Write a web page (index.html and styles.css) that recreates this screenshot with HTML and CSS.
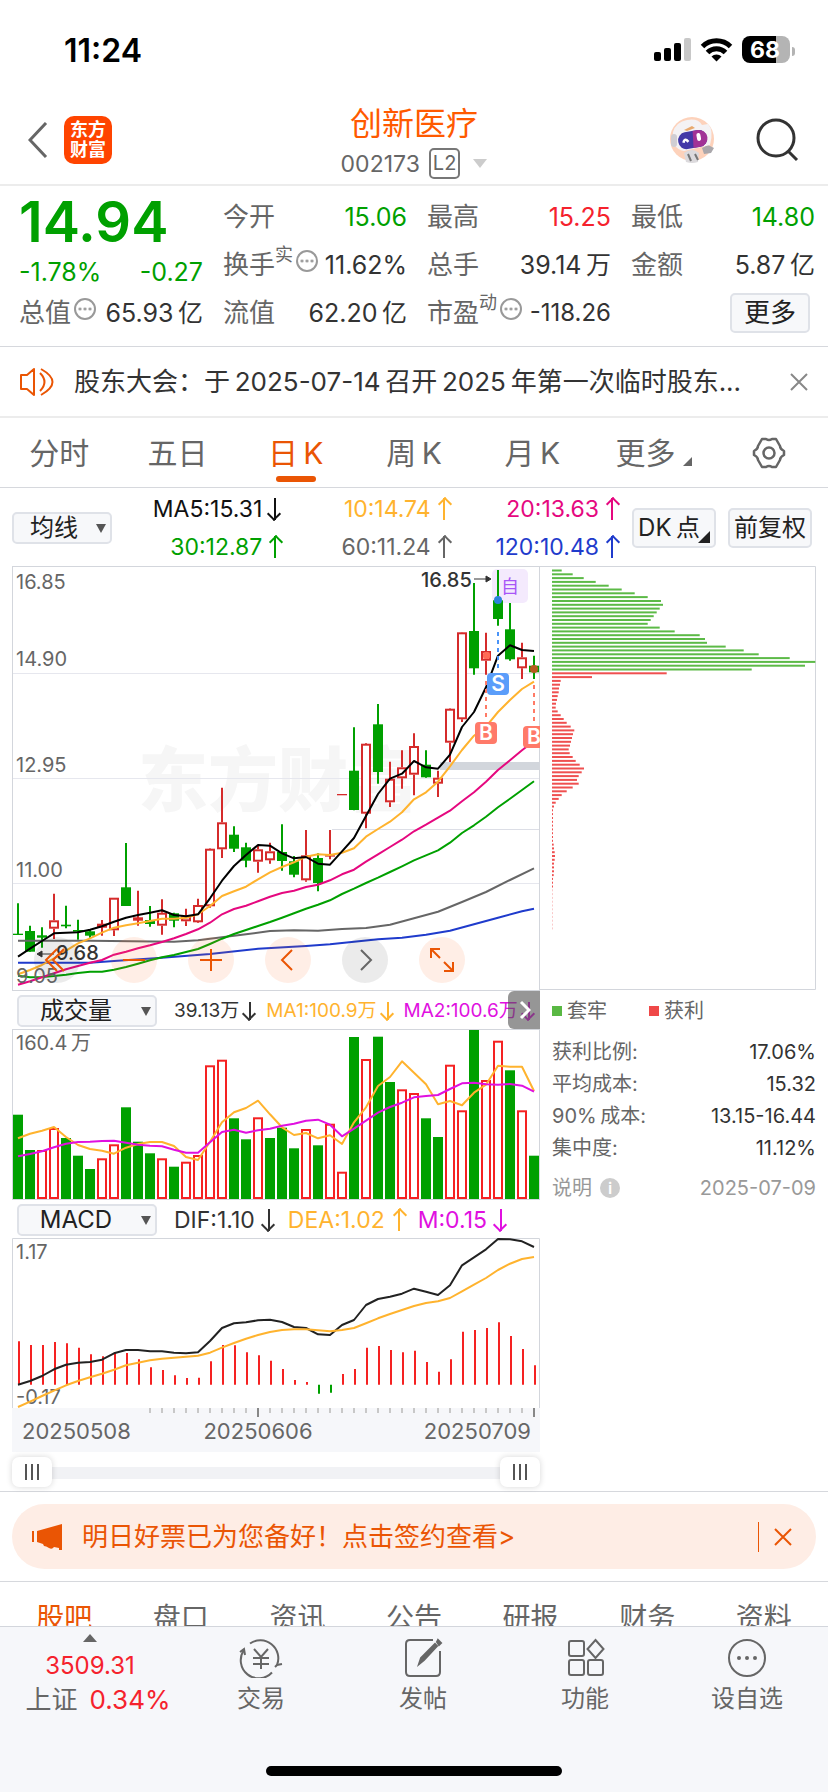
FILE: index.html
```html
<!DOCTYPE html>
<html lang="zh-CN">
<head>
<meta charset="utf-8">
<meta name="viewport" content="width=device-width">
<title>创新医疗 002173</title>
<link rel="stylesheet" href="styles.css">
</head>
<body>
<div class="statusbar">
  <span class="clock">11:24</span>
  <svg class="status-icons" viewBox="0 0 138 30" width="138" height="30" aria-hidden="true">
    <rect x="1" y="16" width="7" height="9" rx="2"/><rect x="11" y="12" width="7" height="13" rx="2"/><rect x="21" y="7" width="7" height="18" rx="2"/><rect x="31" y="2" width="7" height="23" rx="2" fill="#c8c8c8"/>
    <g fill="none" stroke="#000" stroke-width="5"><path d="M49.500 10.500a20 20 0 0 1 28 0"/><path d="M54.500 16.500a12.500 12.500 0 0 1 18 0"/></g>
    <path d="M58.500 20.500a7 7 0 0 1 10 0l-5 5z"/>
    <clipPath id="cell"><rect x="89" y="0" width="48" height="27" rx="8"/></clipPath>
    <g clip-path="url(#cell)"><rect x="89" width="34" height="27"/><rect x="123" width="14" height="27" fill="#b4b4b4"/></g>
    <text x="112" y="22" text-anchor="middle" class="charge">68</text>
  </svg>
  <i class="cell-tip"></i>
</div>

<header class="header">
  <div class="header-left">
    <button class="plain" aria-label="返回"><svg width="20" height="36" viewBox="0 0 20 36" fill="none" stroke="#666" stroke-width="3"><path d="M18 1L2 18l16 17"/></svg></button>
    <div class="logo">东方<br>财富</div>
  </div>
  <div class="header-title">
    <h1>创新医疗</h1>
    <p>002173 <span class="level">L2</span><i class="tri-down"></i></p>
  </div>
  <div class="header-right">
    <button class="plain" aria-label="助手">
      <svg width="46" height="46" viewBox="0 0 46 46"><circle cx="23" cy="22" r="22" fill="#fdd2bb"/><path d="M15 36q8-6 15 0l-1 9q-6 2-12 0z" fill="#dcdadd"/><path d="M19 37l3 7m4-7l3 6" stroke="#777" stroke-width="2"/><path d="M33 31l6-3 6 3-3 5-7 1z" fill="#aaa7ab"/><path d="M4 15Q7 5 18 3q11-2 15 5l6-1q6 6 2 21L15 34Q2 32 4 15z" fill="#f4f2f4"/><rect x="2" y="17" width="6" height="13" rx="3" fill="#d0ced3"/><path d="M15 13l8-4 3 2-8 3z" fill="#e8a96e"/><g transform="rotate(-10 24 22)"><rect x="9" y="14" width="29" height="17" rx="8" fill="#4338a7"/><path d="M25 14h5a8 8 0 0 1 0 17h-7z" fill="#a13296"/><path d="M14 24q2-5 5 0" fill="none" stroke="#fff" stroke-width="2.500"/><rect x="28" y="17" width="4" height="8" rx="2" fill="#fff"/></g></svg>
    </button>
    <button class="plain" aria-label="搜索"><svg width="44" height="44" viewBox="0 0 44 44" fill="none" stroke="#333" stroke-width="3"><circle cx="20" cy="20" r="18"/><path d="M32 33l9 9"/></svg></button>
  </div>
</header>

<main class="content">
<section class="quote">
  <div class="quote-col">
    <strong class="price">14.94</strong>
    <div class="cell change"><span>-1.78%</span><span>-0.27</span></div>
    <div class="cell"><span class="name">总值<i class="dots"></i></span><b>65.93&thinsp;亿</b></div>
  </div>
  <div class="quote-col">
    <div class="cell"><span class="name">今开</span><b class="down">15.06</b></div>
    <div class="cell"><span class="name">换手<sup>实</sup><i class="dots"></i></span><b>11.62%</b></div>
    <div class="cell"><span class="name">流值</span><b>62.20&thinsp;亿</b></div>
  </div>
  <div class="quote-col">
    <div class="cell"><span class="name">最高</span><b class="up">15.25</b></div>
    <div class="cell"><span class="name">总手</span><b>39.14&thinsp;万</b></div>
    <div class="cell"><span class="name">市盈<sup>动</sup><i class="dots"></i></span><b class="long">-118.26</b></div>
  </div>
  <div class="quote-col">
    <div class="cell"><span class="name">最低</span><b class="down">14.80</b></div>
    <div class="cell"><span class="name">金额</span><b>5.87&thinsp;亿</b></div>
    <div class="cell end"><button class="box more">更多</button></div>
  </div>
</section>

<section class="notice">
  <svg width="34" height="30" viewBox="0 0 34 30" fill="none" stroke="#ea5504" stroke-width="2" stroke-linejoin="round"><path d="M14 2v26l-7-6H1V8h6zM20 6q9 9 0 18M21 2q23 13 0 26"/></svg>
  <p>股东大会：于&thinsp;2025-07-14&thinsp;召开&thinsp;2025&thinsp;年第一次临时股东...</p>
  <button class="plain" aria-label="关闭"><svg width="18" height="18" viewBox="0 0 18 18" stroke="#888" stroke-width="2"><path d="M1 1l16 16M17 1L1 17"/></svg></button>
</section>

<nav class="periods">
  <button>分时</button><button>五日</button><button class="active">日&thinsp;K</button><button>周&thinsp;K</button><button>月&thinsp;K</button>
  <button class="has-corner">更多<i class="corner"></i></button>
  <button aria-label="设置"><svg width="34" height="32" viewBox="0 0 34 32" fill="none" stroke="#666" stroke-width="2.500" stroke-linejoin="round"><path d="M10 2h4q3 2 6 0h4l4 7q0 3 4 5v4q-4 2-4 5l-4 7h-4q-3-2-6 0h-4l-4-7q0-3-4-5v-4q4-2 4-5z"/><circle cx="17" cy="16" r="5.500"/></svg></button>
</nav>

<section class="averages">
  <label class="pick small"><select aria-label="主图指标"><option>均线</option></select></label>
  <div class="ma-grid">
    <span class="c5">MA5:15.31<i class="arrow dn"></i></span><span class="c10">10:14.74<i class="arrow"></i></span><span class="c20">20:13.63<i class="arrow"></i></span>
    <span class="c30">30:12.87<i class="arrow"></i></span><span class="c60">60:11.24<i class="arrow"></i></span><span class="c120">120:10.48<i class="arrow"></i></span>
  </div>
  <button class="box tool dk">DK&thinsp;点<i class="corner dark"></i></button>
  <button class="box tool">前复权</button>
</section>

<section class="charts">
  <div class="chart-left">
    <div class="kline">
      <svg id="kline" viewBox="0 0 528 425" role="img" aria-label="日K线图"></svg>
      <div class="chart-buttons">
        <button class="gray" aria-label="最早"><svg viewBox="0 0 46 46"><path d="M23 12L12 23l11 11M30 12L19 23l11 11"/></svg></button>
        <button aria-label="缩小"><svg viewBox="0 0 46 46"><path d="M12 23h22"/></svg></button>
        <button aria-label="放大"><svg viewBox="0 0 46 46"><path d="M12 23h22M23 12v22"/></svg></button>
        <button aria-label="左移"><svg viewBox="0 0 46 46"><path d="M27 13L17 23l10 10"/></svg></button>
        <button class="gray next" aria-label="右移"><svg viewBox="0 0 46 46"><path d="M19 13l10 10-10 10"/></svg></button>
        <button aria-label="全屏"><svg viewBox="0 0 46 46"><path d="M12 21v-9h9M12 12l9 9M34 25v9h-9M34 34l-9-9"/></svg></button>
      </div>
    </div>
    <div class="sub-head volume-head">
      <label class="pick"><select aria-label="副图一指标"><option>成交量</option></select></label>
      <span>39.13万<i class="arrow dn"></i></span><span class="c10">MA1:100.9万<i class="arrow dn"></i></span><span class="cm">MA2:100.6万<i class="arrow dn"></i></span>
      <button class="scroll-next" aria-label="更多指标"><svg width="12" height="20" viewBox="0 0 12 20" fill="none" stroke="#fff" stroke-width="3"><path d="M2 2l8 8-8 8"/></svg></button>
    </div>
    <svg id="volume" viewBox="0 0 528 171" role="img" aria-label="成交量图"></svg>
    <div class="sub-head macd-head">
      <label class="pick"><select aria-label="副图二指标"><option>MACD</option></select></label>
      <span>DIF:1.10<i class="arrow dn"></i></span><span class="c10">DEA:1.02<i class="arrow"></i></span><span class="cm">M:0.15<i class="arrow dn"></i></span>
    </div>
    <svg id="macd" viewBox="0 0 528 170" role="img" aria-label="MACD图"></svg>
    <svg id="axis" viewBox="0 0 528 44" role="img" aria-label="日期轴"></svg>
    <div class="range"><input type="range" value="0" aria-label="开始日期"><input type="range" value="100" aria-label="结束日期"></div>
  </div>
  <aside class="chips">
    <svg id="chips" viewBox="0 0 276 424" role="img" aria-label="筹码分布"></svg>
    <div class="legend"><span><i class="key-green"></i>套牢</span><span><i class="key-red"></i>获利</span></div>
    <dl>
      <div><dt>获利比例:</dt><dd>17.06%</dd></div>
      <div><dt>平均成本:</dt><dd>15.32</dd></div>
      <div><dt>90%&thinsp;成本:</dt><dd>13.15-16.44</dd></div>
      <div><dt>集中度:</dt><dd>11.12%</dd></div>
      <div class="explain"><dt>说明<i class="info">i</i></dt><dd>2025-07-09</dd></div>
    </dl>
  </aside>
</section>

<section class="promo-wrap">
  <div class="promo">
    <svg width="30" height="28" viewBox="0 0 30 28" fill="#ea5504"><path d="M0 8h2v11H0zM5 8L30 1v26h-3v-2l-5-1q-2 3-5 1t-5-2l-1-2-6-2z"/></svg>
    <a href="#sign">明日好票已为您备好！点击签约查看&gt;</a>
    <button class="plain" aria-label="关闭广告"><svg width="18" height="18" viewBox="0 0 18 18" stroke="#ea5504" stroke-width="2"><path d="M1 1l16 16M17 1L1 17"/></svg></button>
  </div>
</section>

<nav class="topics">
  <a class="active" href="#guba">股吧</a><a href="#pankou">盘口</a><a href="#news">资讯</a><a href="#notice">公告</a><a href="#report">研报</a><a href="#finance">财务</a><a href="#profile">资料</a>
</nav>
</main>

<footer class="tabbar">
  <a class="index" href="#index"><i class="tri-up"></i><span class="up">3509.31</span><span class="rate">上证<b class="up">0.34%</b></span></a>
  <a href="#trade"><svg viewBox="0 0 44 40"><path d="M11 5.500A18 18 0 0 1 38 27M33 34.500A18 18 0 0 1 5 12"/><path d="M1 14l4-3 1 6M36 29l2-2 5-1M15 11l7 8 7-8M22 19v12M14 20h16M14 26h16"/></svg>交易</a>
  <a href="#post"><svg viewBox="0 0 44 40"><path d="M32 2H9q-4 0-4 4v28q0 4 4 4h26q4 0 4-4V13"/><path class="solid" d="M18 26l2-6L34 6l2 2-13 14zM36 4l1-2 3 3-2 2z"/></svg>发帖</a>
  <a href="#features"><svg viewBox="0 0 44 40"><rect x="6" y="3" width="15" height="15" rx="2"/><rect x="6" y="22" width="15" height="15" rx="2"/><rect x="25" y="22" width="15" height="15" rx="2"/><path d="M32.500 2l8 9-8 9-8-9z"/></svg>功能</a>
  <a href="#watch"><svg viewBox="0 0 44 40"><circle cx="22" cy="20" r="18"/><g class="solid"><circle cx="14" cy="20" r="1"/><circle cx="22" cy="20" r="1"/><circle cx="30" cy="20" r="1"/></g></svg>设自选</a>
  <i class="home"></i>
</footer>
<script src="charts.js"></script>
</body>
</html>
```

FILE: styles.css
```css
* { box-sizing: border-box; }
body { margin: 0; height: 100vh; display: flex; flex-direction: column; overflow: hidden; background: #fff; color: #333; font-family: Inter, "Noto Sans CJK SC", sans-serif; font-size: 24px; line-height: 32px; }
button, select { font: inherit; color: inherit; margin: 0; padding: 0; }
button { cursor: pointer; }
a { color: inherit; text-decoration: none; }
i { font-style: normal; }
b { font-weight: 400; }
h1, p, dl, dd { margin: 0; }
svg { display: block; flex: none; }
.plain { border: 0; background: none; }
.up { color: #f5222d; }
.down { color: #00a000; }
.box { border: 2px solid #dfe2e8; border-radius: 5px; background: #f7f8fa; color: #222; }

.statusbar { flex: none; height: 96px; padding: 6px 33px 0 64px; display: flex; align-items: center; }
.clock { color: #000; font-size: 32px; font-weight: 600; }
.status-icons { margin-left: auto; }
.charge { fill: #fff; font-size: 23px; font-weight: 700; }
.cell-tip { width: 3px; height: 9px; margin-left: 1px; background: #b4b4b4; border-radius: 0 3px 3px 0; }

.header { flex: none; height: 90px; padding: 0 28px; display: grid; grid-template-columns: 1fr auto 1fr; align-items: center; border-bottom: 2px solid #ececec; }
.header-left { display: flex; align-items: center; gap: 16px; }
.logo { width: 48px; height: 48px; padding-top: 4px; border-radius: 10px; background: #ff4400; color: #fff; font-size: 18px; line-height: 20px; font-weight: 700; text-align: center; }
.header-title { padding-top: 3px; text-align: center; }
.header-title h1 { color: #ff5a00; font-size: 32px; font-weight: 400; line-height: 44px; }
.header-title p { display: flex; align-items: center; color: #666; font-size: 23px; line-height: 36px; }
.level { margin: 0 13px 0 9px; padding: 0 2px; border: 2px solid #777; border-radius: 5px; font-size: 20px; line-height: 27px; }
.tri-down { border: 7px solid transparent; border-top: 9px solid #ccc; border-bottom: 0; }
.header-right { display: flex; justify-content: flex-end; align-items: center; gap: 41px; }

.content { flex: 1; min-height: 0; overflow: hidden; }
.quote { display: grid; grid-template-columns: repeat(4, 1fr); gap: 20px; padding: 7px 13px 9px 19px; border-bottom: 1px solid #d6d8dd; white-space: nowrap; font-size: 25px; }
.cell { height: 48px; display: flex; justify-content: space-between; align-items: center; }
.cell.end { justify-content: flex-end; }
.long { font-size: 24px; }
.price { display: block; height: 62px; color: #00a000; font-size: 56px; font-weight: 600; line-height: 58px; }
.cell.change { height: 34px; color: #00a000; }
.name { display: flex; align-items: center; color: #666; font-size: 26px; }
.name sup { align-self: flex-start; margin-top: -6px; font-size: 18px; line-height: 24px; }
.dots { width: 22px; height: 22px; margin: -8px 0 0 3px; border: 2px solid #999; border-radius: 50%; background: radial-gradient(circle, #999 1px, transparent 2px) center / 5px 18px repeat-x content-box; padding: 0 1px; }
.more { width: 80px; height: 40px; margin-right: 5px; font-size: 26px; line-height: 32px; }

.notice { display: flex; align-items: center; height: 71px; padding: 0 20px; border-bottom: 2px solid #ececec; }
.notice p { flex: 1; min-width: 0; margin: 0 20px; overflow: hidden; white-space: nowrap; text-overflow: ellipsis; font-size: 26px; line-height: 36px; }

.periods { height: 70px; display: grid; grid-template-columns: repeat(7, 1fr); border-bottom: 1px solid #d6d8dd; }
.periods button { position: relative; display: flex; justify-content: center; align-items: center; border: 0; background: none; color: #666; font-size: 30px; }
.periods .active { color: #ea5504; }
.periods .active::after { content: ""; position: absolute; bottom: 5px; width: 40px; height: 6px; border-radius: 3px; background: #ea5504; }
.corner { position: absolute; right: 18px; bottom: 21px; border-left: 9px solid transparent; border-bottom: 9px solid #666; }
.corner.dark { right: 4px; bottom: 3px; border-left-width: 12px; border-bottom: 12px solid #222; }
.periods .has-corner { padding-right: 10px; }

.averages { height: 78px; padding: 1px 16px 0 12px; display: flex; align-items: center; }
.pick { position: relative; width: 140px; height: 32px; }
.pick::after { content: ""; position: absolute; right: 6px; top: 12px; border: 5px solid transparent; border-top: 9px solid #555; border-bottom: 0; pointer-events: none; }
.pick select { width: 100%; height: 100%; appearance: none; padding-right: 22px; border: 2px solid #dfe2e8; border-radius: 5px; background: #f7f8fa; color: #222; line-height: 28px; text-align: center; text-align-last: center; }
.pick.small { width: 100px; }
.pick.small select { padding-right: 16px; }
.ma-grid { flex: 1; display: grid; grid-template-columns: repeat(3, 1fr); grid-auto-rows: 38px; margin-right: 15px; font-size: 23px; white-space: nowrap; }
.ma-grid span { display: flex; justify-content: flex-end; align-items: center; }
.arrow { display: inline-block; position: relative; width: 10px; height: 22px; margin-left: 8px; background: linear-gradient(currentColor, currentColor) center / 2px 100% no-repeat; }
.arrow::after { content: ""; position: absolute; left: 1px; top: 1px; width: 8px; height: 8px; border: solid currentColor; border-width: 2px 0 0 2px; transform: rotate(45deg); }
.arrow.dn { transform: rotate(180deg); }
.c5 { color: #111; } .c10 { color: #ffb32e; } .c20 { color: #e5087f; } .c30 { color: #00a000; } .c60 { color: #666; } .c120 { color: #1f3bcc; } .cm { color: #e010e0; }
.tool { position: relative; width: 84px; height: 40px; white-space: nowrap; }
.tool.dk { padding-right: 10px; }
.tool + .tool { margin-left: 12px; }

.charts { display: grid; grid-template-columns: 528fr 276fr; padding: 0 12px; border-bottom: 1px solid #d6d8dd; }
.charts svg { width: 100%; }
.chart-left { min-width: 0; }
.kline { position: relative; }
.chart-buttons { position: absolute; left: 22px; bottom: 8px; display: flex; gap: 31px; }
.chart-buttons button { width: 46px; height: 46px; padding: 0; border: 0; border-radius: 50%; background: rgba(255, 115, 50, .12); }
.chart-buttons .gray { background: rgba(60, 60, 60, .1); }
.chart-buttons svg { fill: none; stroke: #ea5504; stroke-width: 2; }
.chart-buttons .next svg { stroke: #666; }
.sub-head { position: relative; height: 38px; padding: 1px 0 0 5px; display: flex; align-items: center; white-space: nowrap; overflow: hidden; }
.sub-head span { display: flex; align-items: center; }
.sub-head .pick { flex: none; }
.sub-head .pick + span { margin-left: 17px; }
.volume-head span { margin-right: 11px; font-size: 19px; }
.volume-head .arrow { height: 18px; margin-left: 6px; }
.macd-head span { margin-right: 14px; font-size: 23px; }
.macd-head .arrow { margin-left: 9px; }
.scroll-next { position: absolute; right: 0; top: 0; width: 32px; height: 38px; padding-left: 11px; border: 0; border-radius: 6px 0 0 6px; background: rgba(80, 80, 80, .6); }
.charts .scroll-next svg { width: 12px; }
.range { position: relative; height: 39px; background: linear-gradient(#f1f2f5, #f1f2f5) center 15px / 100% 12px no-repeat; }
.range input { appearance: none; position: absolute; left: 0; top: 5px; width: 100%; height: 30px; margin: 0; background: none; pointer-events: none; }
.range input::-webkit-slider-thumb { appearance: none; width: 40px; height: 30px; border-radius: 7px; box-shadow: 0 0 6px rgba(0, 0, 0, .16); pointer-events: auto; background: linear-gradient(#555, #555) 13px 7px / 2px 16px no-repeat, linear-gradient(#555, #555) 19px 7px / 2px 16px no-repeat, linear-gradient(#555, #555) 25px 7px / 2px 16px no-repeat, #fff; }

.frame { fill: none; stroke: #d3d6dc; }
.grid-line { stroke: #e6e7ee; stroke-width: 1; }
.scale { fill: #666; font-size: 20px; }
.peak { fill: #333; font-size: 20px; font-weight: 500; }
.date { fill: #666; font-size: 22px; }
.watermark { fill: #f6f6f6; font-size: 70px; font-weight: 900; }
.badge { fill: #fff; font-size: 21px; font-weight: 600; text-anchor: middle; }
.self { fill: #a855f7; font-size: 18px; text-anchor: middle; }

.legend { display: flex; gap: 42px; padding: 5px 0 4px 12px; color: #666; font-size: 20px; }
.legend span { display: flex; align-items: center; gap: 5px; }
.legend i { width: 10px; height: 10px; }
.key-green { background: #59b843; }
.key-red { background: #ef4848; }
.chips dl { padding: 5px 0 0 12px; font-size: 20px; }
.chips dl div { display: flex; justify-content: space-between; white-space: nowrap; }
.chips dt { display: flex; align-items: center; color: #666; }
.chips dl .explain { margin-top: 8px; }
.explain, .chips .explain dt { color: #999; }
.info { width: 20px; height: 20px; margin-left: 8px; border-radius: 50%; background: #ccc; color: #fff; font-size: 16px; line-height: 20px; font-weight: 600; text-align: center; }

.promo-wrap { padding: 12px; border-bottom: 1px solid #d6d8dd; }
.promo { display: flex; align-items: center; height: 65px; padding: 0 24px 0 20px; border-radius: 33px; background: #feede5; color: #ea5504; font-size: 26px; }
.promo a { flex: 1; margin-left: 20px; }
.promo .plain { height: 30px; padding-left: 15px; border-left: 1px solid #ea5504; }

.topics { display: grid; grid-template-columns: repeat(7, 1fr); padding: 16px 6px 0; color: #666; font-size: 28px; line-height: 40px; text-align: center; }
.topics .active { color: #ea5504; }

.tabbar { position: relative; flex: none; height: 166px; display: grid; grid-template-columns: 180fr 162fr 162fr 162fr 162fr; border-top: 1px solid #d3d6dc; background: #f6f7fa; color: #666; }
.tabbar a { display: flex; flex-direction: column; align-items: center; padding-top: 11px; }
.tabbar svg { width: 44px; height: 40px; margin-bottom: 5px; fill: none; stroke: #666; stroke-width: 2; }
.tabbar .solid { fill: #666; }
.tabbar .index { padding-top: 7px; }
.tri-up { margin-bottom: 8px; border: 7px solid transparent; border-top: 0; border-bottom: 8px solid #666; }
.index .rate { display: flex; gap: 12px; margin: 2px 0 0 16px; font-size: 26px; }
.home { position: absolute; bottom: 16px; left: 50%; width: 296px; height: 10px; margin-left: -148px; border-radius: 5px; background: #000; }
```

FILE: charts.js
```js
const UP = '#d52b2b', DOWN = '#00a000', YELLOW = '#ffb32e', MAGENTA = '#e5087f', PURPLE = '#e010e0';
const px = i => 6 + 12 * i;
const num = v => Math.round(v * 10) / 10;
const line = (pts, color, y, w = 2) =>
  `<polyline fill="none" stroke="${color}" stroke-width="${w}" stroke-linejoin="round" points="${pts.map((p, i) => Array.isArray(p) ? px(p[0]) + ',' + num(y(p[1])) : px(i) + ',' + num(y(p))).join(' ')}"/>`;
const put = (id, parts) => { document.getElementById(id).innerHTML = parts.join(''); };

// Each candle: direction, high, body top, body bottom, low (thirds of a pixel).
const candles = `g 1030 1121 1125 1125|g 1097 1113 1175 1175|g 1102 1126 1133 1163|r 1001 1081 1106 1137|g 1037 1094 1099 1105|g 1079 1110 1115 1139|g 1108 1114 1127 1133|r 1080 1091 1103 1127|r 1013 1013 1111 1128|g 849 982 1038 1038|r 992 1072 1082 1097|g 1038 1080 1092 1100|r 1018 1058 1097 1124|g 1058 1060 1082 1102|r 1046 1069 1084 1098|r 1016 1035 1087 1089|r 865 866 1039 1043|r 683 787 868 894|g 799 824 866 876|g 848 862 902 922|r 855 868 905 938|r 848 874 901 911|g 793 876 903 932|g 888 904 944 952|r 810 886 961 965|g 880 894 969 994|r 810 886 889 898|r 702 702 705 705|g 502 632 750 751|r 549 551 761 805|g 432 493 636 671|r 605 656 727 741|r 571 622 655 686|r 520 558 644 706|g 571 614 652 653|r 632 653 671 711|r 445 446 548 606|r 216 217 478 486|g 69 213 325 344|r 218 273 302 344|g 30 121 177 197|g 129 208 298 302|r 248 292 325 357|g 287 317 337 357`
  .split('|').map(s => s.split(' '));
const ky = v => (v - 18) / 3;
const drawCandle = ([dir, ...p], i) => {
  const [hi, top, bottom, lo] = p.map(v => num(ky(v)));
  const x = px(i), h = bottom - top;
  if (dir === 'g' || h < 5)
    return `<path stroke="${dir === 'g' ? DOWN : UP}" stroke-width="2" d="M${x} ${hi}V${lo}"/><rect x="${x - 5}" y="${top}" width="10" height="${num(Math.max(h, 1.3))}" fill="${dir === 'g' ? DOWN : UP}"/>`;
  return `<path stroke="${UP}" stroke-width="2" d="M${x} ${hi}V${top}M${x} ${bottom}V${lo}"/><rect x="${x - 4}" y="${num(top + 1)}" width="8" height="${num(h - 2)}" fill="#fff" stroke="${UP}" stroke-width="2"/>`;
};
const ma5 = [1190,1166,1143,1120,1118,1117,1109,1099,1085,1073,1065,1058,1051,1065,1069,1063,1015,962,918,885,855,857,880,895,891,911,914,874,834,768,702,656,641,603,622,626,584,501,456,382,287,256,270,273];
const ma10 = [1243,1230,1215,1195,1172,1150,1135,1118,1103,1096,1090,1083,1076,1076,1073,1063,1038,1008,994,980,958,937,921,907,890,883,885,878,865,830,807,785,757,718,697,665,619,570,527,500,456,420,387,365];
const ma20 = [1274,1264,1252,1240,1228,1218,1208,1200,1184,1175,1165,1156,1146,1135,1122,1108,1088,1063,1047,1037,1024,1010,999,992,981,974,961,943,929,905,883,861,839,814,794,773,752,724,697,665,630,601,571,543];
const ma30 = [1247,1252,1251,1248,1244,1239,1235,1235,1229,1221,1211,1201,1192,1185,1176,1167,1152,1136,1122,1110,1098,1086,1073,1060,1046,1034,1021,1002,986,969,953,936,919,901,886,871,848,819,796,770,742,716,690,664];
const ma60 = [[0,1142],[6,1142],[13,1145],[15,1141],[17,1132],[19,1123],[21,1113],[23,1111],[25,1112],[27,1107],[29,1104],[31,1094],[33,1075],[35,1055],[37,1026],[39,996],[41,960],[43,925]];
const ma120 = [[0,1208],[6,1208],[8,1203],[12,1193],[16,1182],[20,1166],[24,1158],[26,1153],[28,1145],[30,1138],[32,1133],[34,1124],[36,1112],[38,1093],[40,1073],[42,1054],[43,1046]];

const badge = (x, y, letter, color) => `<rect x="${x}" y="${y}" width="22" height="22" rx="4" fill="${color}"/><text class="badge" x="${x + 11}" y="${y + 18}">${letter}</text>`;
put('kline', [
  '<text class="watermark" x="126" y="240">东方财富</text>',
  ...[340, 655, 969].map(v => `<path class="grid-line" d="M1 ${Math.round(ky(v)) + .5}H527"/>`),
  '<path stroke="#dcdee6" d="M320 263.5H527"/><rect x="428" y="196" width="99" height="8" fill="#d2d6dc"/>',
  '<rect class="frame" x=".5" y=".5" width="527" height="424"/>',
  '<rect x="480" y="3" width="36" height="34" rx="5" fill="#f4eafd"/><text class="self" x="498" y="27">自</text>',
  ...candles.map(drawCandle),
  line(ma60, '#666', ky), line(ma120, '#1f3bcc', ky), line(ma30, DOWN, ky), line(ma20, MAGENTA, ky), line(ma10, YELLOW, ky), line(ma5, '#000', ky),
  '<g fill="none" stroke-width="2" stroke-dasharray="4 4"><path stroke="#4a94f8" d="M486 66v38"/><path stroke="#ff7a66" d="M474 115v38M522 119v38"/></g>',
  '<circle cx="486" cy="34" r="4" fill="#2c82dd"/><rect x="471" y="86" width="7" height="7" rx="2" fill="#ff6a55"/><circle cx="522" cy="103" r="4" fill="#b75b20"/>',
  badge(475, 107, 'S', '#5a9dfa'), badge(463, 156, 'B', '#ff7a69'), badge(511, 160, 'B', '#ff7a69'),
  ...[['16.85', 23], ['14.90', 100], ['12.95', 206], ['11.00', 311], ['9.05', 417]].map(([t, y]) => `<text class="scale" x="4" y="${y}">${t}</text>`),
  '<text class="peak" x="409" y="21">16.85</text><path fill="#333" stroke="#333" d="M462 13h12v-3l5 3-5 3v-3"/>',
  '<text class="peak" x="44" y="394">9.68</text><path fill="#333" stroke="#333" d="M42 388H30v-3l-5 3 5 3v-3"/>'
]);

const volumes = 'g404 g510 r510 r444 g474 g527 g567 r535 r493 g382 g485 g520 r535 g560 r545 r525 r256 r239 g415 g478 r412 g474 g443 g505 r447 g496 r431 r575 g171 r237 g170 g306 r328 r339 g415 g471 r254 r391 g150 r300 r182 g271 r391 g527'.split(' ');
const vy = v => (v - 147) / 3;
const va = [475,461,452,441,471,495,507,512,521,503,492,486,486,498,531,540,485,427,397,384,362,403,442,465,459,475,466,492,427,382,318,291,244,278,313,373,363,376,338,314,257,260,260,333];
const vb = [529,522,514,502,491,486,485,483,482,488,494,497,499,509,518,518,487,456,449,458,451,446,437,431,422,419,434,469,446,422,398,381,368,352,348,345,327,310,308,313,314,312,317,335];
put('volume', [
  '<rect class="frame" x=".5" y=".5" width="527" height="170"/>',
  ...volumes.map((s, i) => {
    const y = num(vy(+s.slice(1)));
    return s[0] === 'g'
      ? `<rect x="${px(i) - 5}" y="${y}" width="10" height="${num(170 - y)}" fill="${DOWN}"/>`
      : `<rect x="${px(i) - 4}" y="${y + 1}" width="8" height="${num(168 - y)}" fill="#fff" stroke="#f52222" stroke-width="2"/>`;
  }),
  line(va, YELLOW, vy), line(vb, PURPLE, vy),
  '<text class="scale" x="4" y="21">160.4\u2009万</text>'
]);

const my = v => (v - 114) / 3;
const bars = [424,435,435,426,430,443,463,469,457,459,478,502,510,526,534,533,484,435,436,457,466,482,507,540,546,581,578,522,507,443,438,450,457,452,486,515,478,395,390,384,367,408,447,496];
const dif = [554,543,528,508,494,488,486,479,460,450,450,454,454,458,460,457,423,384,370,367,361,359,366,381,384,403,405,375,360,315,297,290,281,266,275,285,256,196,172,148,117,118,124,141];
const dea = [621,605,588,572,556,543,532,521,509,496,488,481,476,473,470,467,458,443,429,416,405,396,390,388,388,391,394,390,384,370,355,342,330,318,309,304,294,274,254,234,210,191,177,171];
put('macd', [
  '<path class="frame" d="M.5 170V.5H527.5V170"/>',
  '<text class="scale" x="4" y="21">1.17</text><text class="scale" x="4" y="166">-0.17</text>',
  ...bars.map((v, i) => `<path stroke="${v > 554 ? DOWN : '#f52222'}" stroke-width="2" d="M${px(i) + 1} ${num(my(v))}V${num(my(554))}"/>`),
  line(dif, '#222', my), line(dea, YELLOW, my)
]);

const ticks = [];
for (let i = 11; i < 44; i++) {
  const major = i === 20 || i === 43;
  ticks.push(`<path stroke="${major ? '#888' : '#c8c8c8'}" stroke-width="2" d="M${px(i)} 0v${major ? 9 : 5}"/>`);
}
put('axis', [
  '<rect width="528" height="44" fill="#f6f7fa"/>', ...ticks,
  '<text class="date" x="10" y="31">20250508</text><text class="date" x="246" y="31" text-anchor="middle">20250606</text><text class="date" x="519" y="31" text-anchor="end">20250709</text>'
]);

// Cost distribution, one bar per price level; the first 27 lie above the current price.
const cost = [65,98,131,167,206,245,284,323,363,369,359,350,341,332,323,359,404,479,495,501,557,611,656,749,826,795,635,380,156,62,60,57,56,53,51,48,47,53,62,71,80,92,103,99,96,93,90,86,89,98,107,119,132,125,116,111,116,98,80,65,56,47,42,39,39,39,38,38,38,38,39,39,41,42,44,45,44,42,42,42,41,39,38,38,37,37,37,37,37,37,37,37,37,37,37];
put('chips', [
  '<path class="frame" d="M0 .5H275.500V423.500H0"/>',
  ...cost.map((v, i) => `<rect x="12" y="${num(3.5 + i * 3.807)}" width="${Math.max(1, num((v - 36) / 3))}" height="2" fill="${i < 27 ? '#5cba47' : '#ef5050'}"${v < 38 ? ' opacity=".3"' : ''}/>`)
]);
```
